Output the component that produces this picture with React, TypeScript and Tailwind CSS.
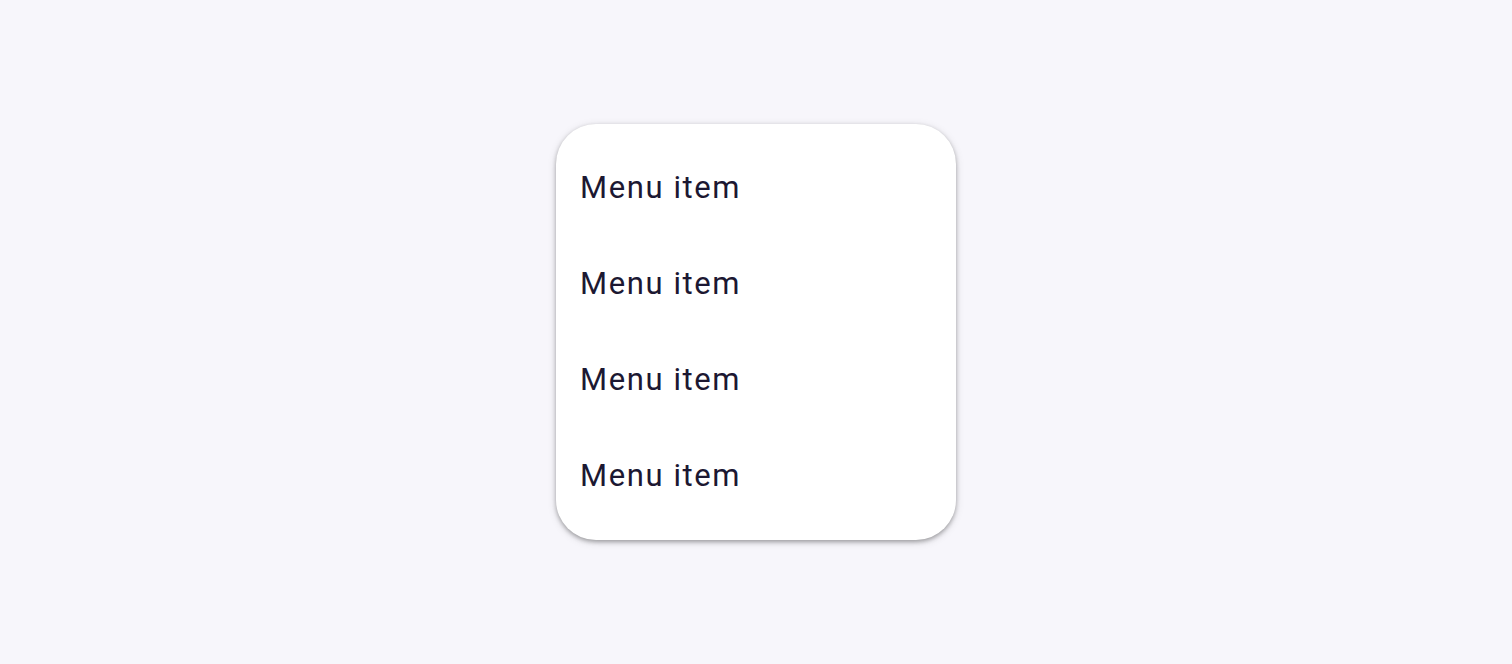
const items = ["Menu item", "Menu item", "Menu item", "Menu item"];

export default function App() {
  return (
    <div
      className="w-full h-[664px] bg-[#f7f6fb] flex items-center justify-center"
      style={{ fontFamily: "Roboto, 'Liberation Sans', sans-serif" }}
    >
      <ul className="w-[400px] py-4 bg-white rounded-[40px] shadow-[0_2px_4px_rgba(0,0,0,0.3),0_2px_10px_rgba(0,0,0,0.12)]">
        {items.map((label, i) => (
          <li
            key={i}
            className="h-24 px-6 flex items-center text-[31px] tracking-[1.6px] text-[#1c1832]"
          >
            {label}
          </li>
        ))}
      </ul>
    </div>
  );
}
